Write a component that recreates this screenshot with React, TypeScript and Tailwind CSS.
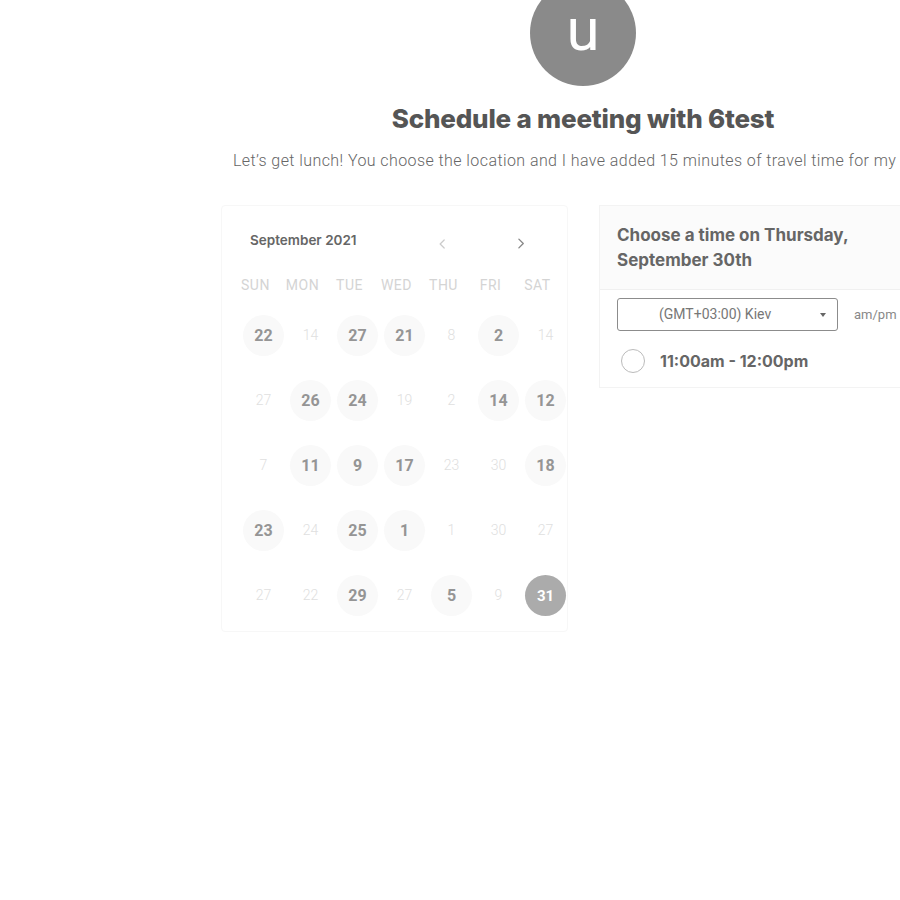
import React from "react";

type Day = { n: number; on?: boolean; sel?: boolean };

const weeks: Day[][] = [
  [{ n: 22, on: true }, { n: 14 }, { n: 27, on: true }, { n: 21, on: true }, { n: 8 }, { n: 2, on: true }, { n: 14 }],
  [{ n: 27 }, { n: 26, on: true }, { n: 24, on: true }, { n: 19 }, { n: 2 }, { n: 14, on: true }, { n: 12, on: true }],
  [{ n: 7 }, { n: 11, on: true }, { n: 9, on: true }, { n: 17, on: true }, { n: 23 }, { n: 30 }, { n: 18, on: true }],
  [{ n: 23, on: true }, { n: 24 }, { n: 25, on: true }, { n: 1, on: true }, { n: 1 }, { n: 30 }, { n: 27 }],
  [{ n: 27 }, { n: 22 }, { n: 29, on: true }, { n: 27 }, { n: 5, on: true }, { n: 9 }, { n: 31, sel: true }],
];

const heads = ["SUN", "MON", "TUE", "WED", "THU", "FRI", "SAT"];

const Chevron = ({ dir, className }: { dir: "l" | "r"; className: string }) => (
  <svg viewBox="0 0 12 12" className={className} fill="none" aria-hidden>
    <path
      d={dir === "l" ? "M8 1.5L3.5 6 8 10.5" : "M4 1.5L8.5 6 4 10.5"}
      stroke="currentColor"
      strokeWidth="1.4"
      strokeLinecap="round"
      strokeLinejoin="round"
    />
  </svg>
);

export default function App() {
  return (
    <div className="w-full h-screen overflow-hidden bg-white font-['Roboto',sans-serif]">
      <div className="w-[1166px] flex flex-col items-center">
        {/* avatar */}
        <div className="-mt-[20px] h-[106px] w-[106px] rounded-full bg-[#8a8a8a] flex items-center justify-center">
          <span className="text-white text-[60px] leading-none font-normal -mt-[6px]">u</span>
        </div>

        <h1 className="mt-[13px] text-[26px] font-extrabold text-[#555] font-['Inter',sans-serif] tracking-[-0.2px]">
          Schedule a meeting with 6test
        </h1>
        <div className="w-[700px] mt-[11px]">
          <p className="text-[16px] font-light tracking-[0.42px] text-[#666] whitespace-nowrap">
            Let’s get lunch! You choose the location and I have added 15 minutes of travel time for my commute.
          </p>
        </div>

        <div className="mt-[32px] flex gap-[31px] items-start">
          {/* calendar */}
          <div className="w-[347px] h-[427px] border border-[#f7f7f7] rounded-sm pt-[24px]">
            <div className="flex items-center pl-[28px] pr-[40px]">
              <span className="whitespace-nowrap text-[13.5px] font-semibold text-[#666] font-['Inter',sans-serif]">
                September 2021
              </span>
              <Chevron dir="l" className="ml-[80px] mt-[8px] h-[12px] w-[12px] text-[#ccc]" />
              <Chevron dir="r" className="ml-[68px] mt-[6px] h-[13px] w-[13px] text-[#888]" />
            </div>
            <div className="mt-[25px] grid grid-cols-[repeat(7,47px)] pl-[14px]">
              {heads.map((h) => (
                <div key={h} className="text-center text-[14px] text-[#d4d4d4] tracking-[0.5px] pr-[8px]">
                  {h}
                </div>
              ))}
            </div>
            <div className="mt-[19px] pl-[18px] flex flex-col gap-[24px]">
              {weeks.map((w, i) => (
                <div key={i} className="grid grid-cols-[repeat(7,47px)]">
                  {w.map((d, j) => (
                    <div key={j} className="flex justify-center">
                      <div
                        className={
                          d.sel
                            ? "h-[41px] w-[41px] rounded-full bg-[#ababab] flex items-center justify-center text-[15px] font-bold text-white"
                            : d.on
                            ? "h-[41px] w-[41px] rounded-full bg-[#f9f9f9] flex items-center justify-center text-[16px] font-bold text-[#959595]"
                            : "h-[41px] w-[41px] flex items-center justify-center text-[14px] font-light text-[#e0e0e0]"
                        }
                      >
                        {d.n}
                      </div>
                    </div>
                  ))}
                </div>
              ))}
            </div>
          </div>

          {/* time picker */}
          <div className="w-[346px] border border-[#f3f3f3]">
            <div className="bg-[#fbfbfb] border-b border-[#f0f0f0] px-[17px] pt-[17px] pb-[16px]">
              <div className="text-[17px] leading-[25px] font-bold text-[#666] font-['Inter',sans-serif]">
                Choose a time on Thursday,
                <br />
                September 30th
              </div>
            </div>
            <div className="px-[17px] pt-[8px] pb-[14px]">
              <div className="flex items-center">
                <div className="relative w-[221px] h-[33px] border border-[#8c8c8c] rounded-[3px] flex items-center">
                  <span className="pl-[41px] text-[14px] text-[#777]">(GMT+03:00) Kiev</span>
                  <span className="absolute right-[11px] top-[14px] w-0 h-0 border-x-[3.5px] border-x-transparent border-t-[4px] border-t-[#666]" />
                </div>
                <span className="ml-[16px] text-[13px] text-[#888]">am/pm</span>
              </div>
              <div className="mt-[18px] flex items-center">
                <span className="ml-[4px] h-[24px] w-[24px] rounded-full border border-[#bbb]" />
                <span className="ml-[15px] text-[16px] font-bold text-[#666] font-['Inter',sans-serif]">
                  11:00am - 12:00pm
                </span>
              </div>
            </div>
          </div>
        </div>
      </div>
    </div>
  );
}
